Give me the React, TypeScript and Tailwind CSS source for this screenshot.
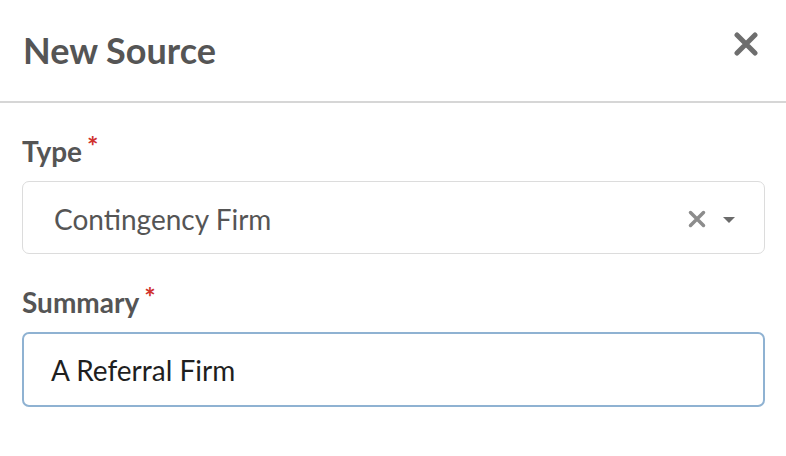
import React from "react";

export default function App() {
  return (
    <div className="w-[786px] h-[456px] bg-white" style={{ fontFamily: "Lato, 'Open Sans', sans-serif" }}>
      <div className="flex items-start justify-between h-[101px] pl-[23px] pr-[28px] pt-[28px]">
        <h1 className="text-[36px] leading-[44px] font-bold text-[#555555]">New Source</h1>
        <button className="mt-[4px] w-[24px] h-[24px] flex items-center justify-center">
          <svg width="24" height="24" viewBox="0 0 24 24">
            <path d="M3 3 L21 21 M21 3 L3 21" stroke="#6e6e6e" strokeWidth="5" strokeLinecap="round" />
          </svg>
        </button>
      </div>
      <div className="h-[2px] bg-[#d6d6d6]" />
      <div className="pl-[22px] pr-[21px] pt-[31px]">
        <label className="flex items-start text-[28px] leading-[34px] font-bold text-[#555555]">
          Type<span className="text-[#d0312d] text-[27px] leading-[27px] ml-[5px] mt-[-2px]">*</span>
        </label>
        <div className="mt-[13px] h-[73px] rounded-[7px] border-[1.5px] border-[#dcdcdc] flex items-center pl-[31px] pr-[28px]">
          <span className="flex-1 text-[28px] text-[#555555] pt-[2px]">Contingency Firm</span>
          <svg width="18" height="18" viewBox="0 0 18 18" className="mr-[16px] mt-[2px]">
            <path d="M2.5 2.5 L15.5 15.5 M15.5 2.5 L2.5 15.5" stroke="#8c8c8c" strokeWidth="3.5" strokeLinecap="round" />
          </svg>
          <svg width="14" height="8" viewBox="0 0 14 8" className="mt-[4px]">
            <path d="M1 1 L13 1 L7 7 Z" fill="#6b6b6b" />
          </svg>
        </div>
        <label className="mt-[31px] flex items-start text-[28px] leading-[34px] font-bold text-[#555555]">
          Summary<span className="text-[#d0312d] text-[27px] leading-[27px] ml-[5px] mt-[-2px]">*</span>
        </label>
        <div className="mt-[13px] h-[75px] rounded-[7px] border-2 border-[#8fb2d2] flex items-center pl-[27px]">
          <span className="text-[28px] text-[#1f1f1f]">A Referral Firm</span>
        </div>
      </div>
    </div>
  );
}
